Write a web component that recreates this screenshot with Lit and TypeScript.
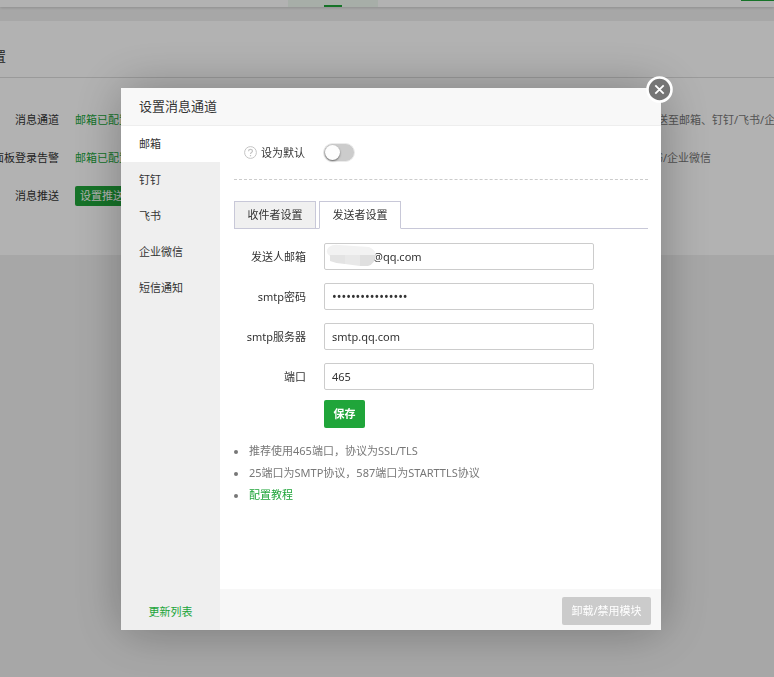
import { LitElement, html, css, svg, nothing } from "lit";
import { customElement, state } from "lit/decorators.js";
import { classMap } from "lit/directives/class-map.js";

const channels = ["邮箱", "钉钉", "飞书", "企业微信", "短信通知"];

const base = css`
  * {
    box-sizing: border-box;
  }
  button,
  input {
    font: inherit;
    color: inherit;
    margin: 0;
  }
  button {
    border: 0;
    background: none;
    padding: 0;
    cursor: pointer;
    white-space: nowrap;
  }
  a {
    color: #20a53a;
    text-decoration: none;
  }
`;

@customElement("settings-page")
class SettingsPage extends LitElement {
  static styles = [
    base,
    css`
      :host {
        display: block;
        overflow: hidden;
      }
      .top {
        display: flex;
        height: 7px;
        background: #fff;
        box-shadow: 0 1px 3px rgba(0, 0, 0, 0.15);
      }
      .top-tab {
        width: 90px;
        margin-left: 288px;
        background: #eff9f1;
        display: flex;
        justify-content: center;
        align-items: flex-end;
      }
      .top-mark {
        width: 18px;
        height: 2px;
        background: #20a53a;
      }
      .top-action {
        width: 33px;
        height: 1px;
        margin-left: auto;
        background: #20a53a;
      }
      .card {
        margin-top: 14px;
        background: #fff;
        padding-bottom: 40px;
      }
      .heading {
        display: flex;
        margin: 0;
        height: 57px;
        padding-top: 24px;
        border-bottom: 1px solid #ddd;
        font-size: 13px;
        font-weight: 400;
        line-height: 22px;
        white-space: nowrap;
      }
      .heading-text {
        display: flex;
        justify-content: flex-end;
        width: 6px;
      }
      .rows {
        padding-top: 23px;
      }
      .row {
        display: flex;
        align-items: center;
        gap: 16px;
        height: 38px;
        white-space: nowrap;
      }
      .label {
        display: flex;
        justify-content: flex-end;
        flex: none;
        width: 59px;
      }
      .value {
        flex: none;
        width: 550px;
      }
      .value.wide {
        width: 555px;
      }
      .desc {
        color: #777;
      }
      .push {
        height: 20px;
        padding: 0 5px;
        border-radius: 2px;
        background: #20a53a;
        color: #fff;
      }
    `,
  ];

  render() {
    return html`
      <header class="top">
        <div class="top-tab"><span class="top-mark"></span></div>
        <span class="top-action"></span>
      </header>
      <section class="card">
        <h1 class="heading"><span class="heading-text">告警设置</span></h1>
        <div class="rows">
          <div class="row">
            <span class="label">消息通道</span>
            <span class="value wide"><a href="#mail">邮箱已配置</a></span>
            <span class="desc">推送至邮箱、钉钉/飞书/企业微信</span>
          </div>
          <div class="row">
            <span class="label">面板登录告警</span>
            <span class="value"><a href="#login">邮箱已配置</a></span>
            <span class="desc">飞书/企业微信</span>
          </div>
          <div class="row">
            <span class="label">消息推送</span>
            <button class="push" type="button">设置推送</button>
          </div>
        </div>
      </section>
    `;
  }
}

@customElement("channel-dialog")
class ChannelDialog extends LitElement {
  @state() private channel = 0;
  @state() private tab = 1;

  static styles = [
    base,
    css`
      :host {
        display: flex;
        flex-direction: column;
        position: relative;
        width: 100%;
        max-width: 540px;
        background: #fff;
        border-radius: 2px;
        box-shadow: 1px 1px 50px rgba(0, 0, 0, 0.3);
      }
      .title {
        margin: 0;
        height: 38px;
        padding: 0 18px;
        line-height: 36px;
        background: #f8f8f8;
        border-bottom: 1px solid #eee;
        font-size: 13px;
        font-weight: 400;
      }
      .close {
        position: absolute;
        top: -12px;
        right: -12px;
        width: 27px;
        height: 27px;
      }
      .close svg,
      .help svg,
      .smudge {
        display: block;
      }
      .body {
        display: flex;
      }
      .side {
        display: flex;
        flex-direction: column;
        flex: none;
        width: 99px;
        background: #efefef;
      }
      .channel {
        height: 36px;
        padding-left: 18px;
        text-align: left;
      }
      .channel.on {
        background: #fff;
      }
      .refresh {
        margin-top: auto;
        height: 36px;
        line-height: 36px;
        text-align: center;
      }
      .main {
        flex: 1;
        min-width: 0;
      }
      .content {
        min-height: 463px;
        padding: 0 13px 0 14px;
      }
      .default {
        display: flex;
        align-items: center;
        height: 54px;
        padding-left: 10px;
        border-bottom: 1px dashed #ccc;
      }
      .help {
        margin-right: 4px;
      }
      .switch {
        appearance: none;
        display: flex;
        width: 32px;
        height: 19px;
        margin-left: 18px;
        padding: 1px;
        border: 1px solid #ebebeb;
        border-radius: 10px;
        background: #ccc;
        cursor: pointer;
      }
      .switch::before {
        content: "";
        width: 15px;
        height: 15px;
        border-radius: 50%;
        background: #fdfdfd;
        box-shadow: 0 1px 2px rgba(0, 0, 0, 0.5);
      }
      .switch:checked {
        background: #20a53a;
        justify-content: flex-end;
      }
      .tabs {
        display: flex;
        gap: 3px;
        margin-top: 21px;
        height: 28px;
        box-shadow: inset 0 -1px #c8c8d8;
      }
      .tab {
        width: 82px;
        border: 1px solid #c8c8d8;
        background: #f0f0f0;
      }
      .tab.on {
        background: #fff;
        border-bottom-color: #fff;
      }
      .form {
        display: grid;
        grid-template-columns: 72px minmax(0, 270px);
        column-gap: 18px;
        row-gap: 13px;
        margin-top: 14px;
        align-items: center;
      }
      .form label {
        text-align: right;
        white-space: nowrap;
      }
      .field {
        position: relative;
      }
      .input {
        display: block;
        width: 100%;
        height: 27px;
        padding: 0 7px;
        border: 1px solid #ccc;
        border-radius: 2px;
        background: #fff;
        outline: 0;
      }
      .input[type="password"] {
        font-family: Roboto, sans-serif;
        font-size: 14px;
      }
      .input.masked {
        padding-left: 48px;
      }
      .smudge {
        position: absolute;
        left: 1px;
        top: 1px;
      }
      .save {
        margin: 10px 0 0 90px;
        width: 41px;
        height: 28px;
        border-radius: 2px;
        background: #20a53a;
        color: #fff;
        font-weight: 700;
      }
      .notes {
        margin: 12px 0 0;
        padding-left: 15px;
        list-style: none;
        color: #777;
        line-height: 22px;
      }
      .notes li {
        position: relative;
      }
      .notes li::before {
        content: "";
        position: absolute;
        left: -15px;
        top: 10px;
        width: 4px;
        height: 4px;
        border-radius: 50%;
        background: #777;
      }
      .foot {
        display: flex;
        align-items: center;
        justify-content: flex-end;
        height: 41px;
        padding: 3px 10px 0 0;
        background: #f7f7f7;
      }
      .unload {
        height: 28px;
        width: 89px;
        border-radius: 2px;
        background: #cbcbcb;
        color: #fff;
      }
    `,
  ];

  private smudge() {
    return svg`
      <svg class="smudge" width="52" height="24" viewBox="0 0 52 24">
        <path d="M4 3Q8 0 14 1L44 3Q51 6 51 12L5 12Q-1 8 4 3Z" fill="#f2f2f2" />
        <path d="M5 11H20V20Q12 20 5 17Z" fill="#e3e3e3" />
        <path d="M20 11H35V22L20 20Z" fill="#e8e8e8" />
        <path d="M35 11H51Q50 20 43 22L35 22Z" fill="#dfdfdf" />
      </svg>`;
  }

  render() {
    const fields = [
      { id: "sender", label: "发送人邮箱", value: "@qq.com", masked: true },
      { id: "secret", label: "smtp密码", value: "abcdefghijklmnop", type: "password" },
      { id: "server", label: "smtp服务器", value: "smtp.qq.com" },
      { id: "port", label: "端口", value: "465" },
    ];
    return html`
      <h2 class="title">设置消息通道</h2>
      <button class="close" type="button" aria-label="关闭">
        <svg width="27" height="27" viewBox="0 0 27 27">
          <circle cx="13.5" cy="13.5" r="12" fill="#757575" stroke="#fff" stroke-width="2.6" />
          <path d="M9.3 9.3L17.7 17.7M17.7 9.3L9.3 17.7" stroke="#fff" stroke-width="1.8" />
        </svg>
      </button>
      <div class="body">
        <nav class="side">
          ${channels.map(
            (name, i) => html`<button
              type="button"
              class=${classMap({ channel: true, on: i === this.channel })}
              @click=${() => (this.channel = i)}
            >${name}</button>`
          )}
          <a class="refresh" href="#refresh">更新列表</a>
        </nav>
        <div class="main">
          <div class="content">
            <div class="default">
              <span class="help">
                <svg width="13" height="13" viewBox="0 0 13 13" fill="none" stroke="#c4c4c4">
                  <circle cx="6.5" cy="6.5" r="5.9" />
                  <path d="M4.5 5.2Q4.6 3.4 6.5 3.4T8.5 5Q8.5 5.8 7.5 6.4T6.5 8M6.5 9V10.2" stroke-width="1.2" />
                </svg>
              </span>
              <label for="default">设为默认</label>
              <input class="switch" id="default" type="checkbox" />
            </div>
            <div class="tabs" role="tablist">
              ${["收件者设置", "发送者设置"].map(
                (name, i) => html`<button
                  type="button"
                  role="tab"
                  class=${classMap({ tab: true, on: i === this.tab })}
                  @click=${() => (this.tab = i)}
                >${name}</button>`
              )}
            </div>
            <form class="form">
              ${fields.map(
                (f) => html`
                  <label for=${f.id}>${f.label}</label>
                  <div class="field">
                    <input
                      class=${classMap({ input: true, masked: !!f.masked })}
                      id=${f.id}
                      type=${f.type ?? "text"}
                      autocomplete="off"
                      .value=${f.value}
                    />
                    ${f.masked ? this.smudge() : nothing}
                  </div>
                `
              )}
            </form>
            <button class="save" type="button">保存</button>
            <ul class="notes">
              <li>推荐使用465端口，协议为SSL/TLS</li>
              <li>25端口为SMTP协议，587端口为STARTTLS协议</li>
              <li><a href="#guide">配置教程</a></li>
            </ul>
          </div>
          <footer class="foot">
            <button class="unload" type="button">卸载/禁用模块</button>
          </footer>
        </div>
      </div>
    `;
  }
}

@customElement("app-root")
class AppRoot extends LitElement {
  static styles = css`
    :host {
      display: block;
      min-height: 100vh;
      background: #f0f0f0;
      color: #333;
      font: 11px/16px "Noto Sans", "Noto Sans CJK SC", sans-serif;
    }
    .shade {
      position: fixed;
      inset: 0;
      display: flex;
      justify-content: center;
      align-items: flex-start;
      padding: 88px 0 0 8px;
      overflow: auto;
      background: rgba(0, 0, 0, 0.3);
    }
  `;

  render() {
    return html`
      <settings-page></settings-page>
      <div class="shade"><channel-dialog></channel-dialog></div>
    `;
  }
}
